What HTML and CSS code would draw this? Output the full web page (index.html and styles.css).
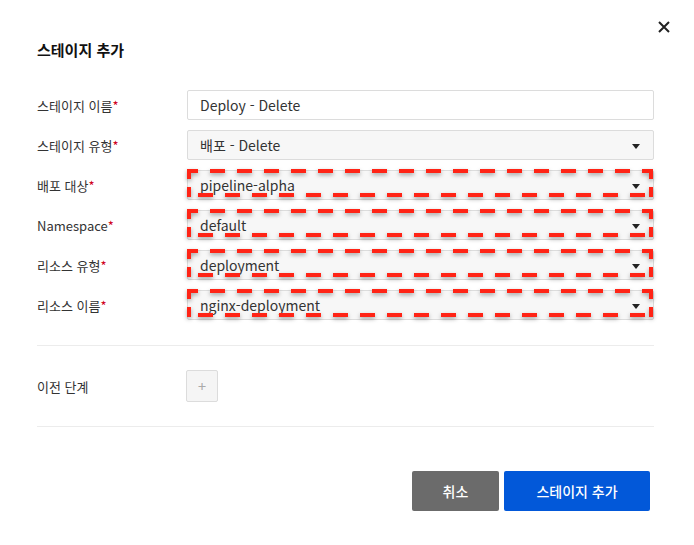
FILE: index.html
```html
<!DOCTYPE html>
<html lang="ko">
<head>
<meta charset="utf-8">
<link rel="stylesheet" href="styles.css">
</head>
<body>
<div class="modal">
  <div class="header">
    <h2 class="title">스테이지 추가</h2>
    <button class="close" aria-label="닫기">
      <svg width="12" height="12" viewBox="0 0 12 12"><path d="M1 1L11 11M11 1L1 11" stroke="#222" stroke-width="2" fill="none"/></svg>
    </button>
  </div>
  <div class="form">
    <label class="label">스테이지 이름<span class="req">*</span></label>
    <div class="field input">Deploy - Delete</div>

    <label class="label">스테이지 유형<span class="req">*</span></label>
    <div class="field select">배포 - Delete<span class="caret"></span></div>

    <label class="label">배포 대상<span class="req">*</span></label>
    <div class="field select marked">pipeline-alpha<span class="caret"></span></div>

    <label class="label">Namespace<span class="req">*</span></label>
    <div class="field select marked">default<span class="caret"></span></div>

    <label class="label">리소스 유형<span class="req">*</span></label>
    <div class="field select marked">deployment<span class="caret"></span></div>

    <label class="label">리소스 이름<span class="req">*</span></label>
    <div class="field select marked">nginx-deployment<span class="caret"></span></div>
  </div>
  <div class="divider"></div>
  <div class="prev-row">
    <span class="label">이전 단계</span>
    <button class="add">+</button>
  </div>
  <div class="divider"></div>
  <div class="actions">
    <button class="btn cancel">취소</button>
    <button class="btn primary">스테이지 추가</button>
  </div>
</div>
</body>
</html>
```
FILE: styles.css
```css
* { box-sizing: border-box; }
html, body { margin: 0; padding: 0; background: #fff; }
body {
  font-family: "Noto Sans CJK KR", "Noto Sans", sans-serif;
  color: #333;
  width: 694px;
  height: 545px;
}
.modal {
  padding: 0 40px 0 37px;
}
.header {
  position: relative;
  padding-top: 38px;
  height: 62px;
}
.title {
  margin: 0;
  font-size: 15px;
  font-weight: 700;
  line-height: 24px;
  color: #111;
}
.close {
  position: absolute;
  right: -18px;
  top: 19px;
  width: 16px;
  height: 16px;
  padding: 0;
  border: 0;
  background: none;
  display: flex;
  align-items: center;
  justify-content: center;
}
.form {
  margin-top: 28px;
  display: grid;
  grid-template-columns: 150px 1fr;
  grid-auto-rows: 30px;
  row-gap: 10px;
}
.label {
  display: flex;
  align-items: center;
  font-size: 13px;
  color: #333;
}
.req { color: #d0021b; }
.field {
  position: relative;
  display: flex;
  align-items: center;
  height: 30px;
  padding: 0 12px;
  border: 1px solid #dcdcdc;
  border-radius: 2px;
  font-size: 14px;
  color: #333;
  background: #fff;
}
.select { background: #f7f7f7; }
.caret {
  position: absolute;
  right: 13px;
  top: 13px;
  width: 0;
  height: 0;
  border-left: 4px solid transparent;
  border-right: 4px solid transparent;
  border-top: 5px solid #222;
}
.marked::after {
  content: "";
  position: absolute;
  left: -1px;
  right: 0px;
  top: -2px;
  bottom: 2px;
  background:
    repeating-linear-gradient(90deg, transparent 0 12px, #ff2416 12px 27px) -16px 0 / calc(100% + 16px) 4px no-repeat,
    repeating-linear-gradient(90deg, transparent 0 12px, #ff2416 12px 27px) -1px 100% / calc(100% + 1px) 4px no-repeat,
    linear-gradient(180deg, #ff2416 0 10px, transparent 10px calc(100% - 10px), #ff2416 calc(100% - 10px)) 0 0 / 4px 100% no-repeat,
    linear-gradient(180deg, #ff2416 0 10px, transparent 10px calc(100% - 10px), #ff2416 calc(100% - 10px)) 100% 0 / 4px 100% no-repeat;
  filter: drop-shadow(0 2px 2px rgba(0,0,0,0.35));
  pointer-events: none;
}
.divider {
  height: 1px;
  background: #ececec;
}
.form + .divider { margin-top: 25px; }
.prev-row {
  display: grid;
  grid-template-columns: 149px 32px;
  align-items: center;
  padding: 24px 0;
}
.add {
  width: 32px;
  height: 32px;
  border: 1px solid #dcdcdc;
  border-radius: 2px;
  background: #f5f5f5;
  color: #aaa;
  font-size: 15px;
  padding: 0;
  font-family: "Noto Sans", sans-serif;
}
.actions {
  display: flex;
  justify-content: flex-end;
  gap: 5px;
  margin-top: 44px;
  padding-right: 4px;
}
.btn {
  height: 40px;
  border: 0;
  border-radius: 2px;
  color: #fff;
  font-family: "Noto Sans CJK KR", sans-serif;
  font-size: 14px;
  font-weight: 500;
}
.cancel { width: 87px; background: #6b6b6b; }
.primary { width: 146px; background: #0258d9; }
```
